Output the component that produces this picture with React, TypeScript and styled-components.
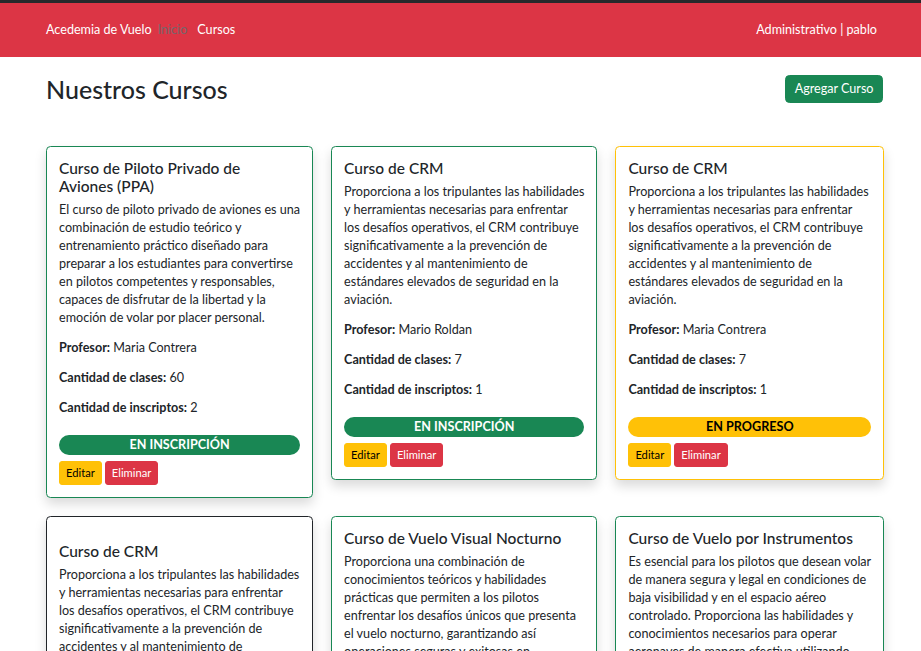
import React from "react";
import styled, { createGlobalStyle } from "styled-components";

const FONT = `Lato, "Noto Sans", "DejaVu Sans", sans-serif`;

const Global = createGlobalStyle`
  html, body { margin: 0; padding: 0; background: #fff; }
  body {
    font-family: ${FONT};
    font-size: 12.6px;
    line-height: 18px;
    color: #212529;
  }
  * { box-sizing: border-box; }
`;

const NavBar = styled.nav`
  display: flex;
  align-items: center;
  justify-content: space-between;
  height: 57px;
  border-top: 3px solid #27292b;
  background: #dc3545;
  padding: 0 44px 0 46px;
`;

const NavLeft = styled.div`
  display: flex;
  align-items: center;
`;

const Brand = styled.a`
  color: #fff;
  font-size: 12.6px;
  margin-right: 6px;
`;

const NavLink = styled.a<{ $muted?: boolean }>`
  color: ${(p) => (p.$muted ? "#76666b" : "#fff")};
  margin-right: 10px;
`;

const UserInfo = styled.span`
  color: #fff;
`;

const Main = styled.main`
  padding: 18px 38px 40px 46px;
`;

const HeaderRow = styled.div`
  display: flex;
  align-items: center;
  justify-content: space-between;
  height: 28px;
  margin-bottom: 43px;
`;

const PageTitle = styled.h1`
  margin: 0;
  font-size: 25px;
  font-weight: 500;
  line-height: 28px;
`;

const AddButton = styled.button`
  font-family: ${FONT};
  font-size: 12.6px;
  line-height: 18px;
  height: 28px;
  padding: 0 8.5px;
  color: #fff;
  background: #198754;
  border: 1px solid #198754;
  border-radius: 4.5px;
`;

const Grid = styled.div`
  display: grid;
  grid-template-columns: repeat(3, 1fr);
  column-gap: 18px;
  row-gap: 18px;
  align-items: start;
`;

const Card = styled.div<{ $border: string; $extraTop?: boolean }>`
  border: 1px solid ${(p) => p.$border};
  border-radius: 4.5px;
  background: #fff;
  box-shadow: 0 6px 12px rgba(0, 0, 0, 0.15);
  padding: ${(p) => (p.$extraTop ? "25px" : "12px")} 12px 12px;
`;

const CardTitle = styled.h5`
  margin: 0 0 6px;
  font-size: 15.5px;
  font-weight: 500;
  line-height: 18px;
`;

const Desc = styled.p`
  margin: 0 0 12px;
`;

const Line = styled.span`
  display: block;
  white-space: nowrap;
`;

const Info = styled.p`
  margin: 0 0 12px;
  strong { font-weight: 700; }
`;

const Badge = styled.div<{ $bg: string; $fg: string }>`
  margin-top: 18px;
  height: 20px;
  border-radius: 10px;
  background: ${(p) => p.$bg};
  color: ${(p) => p.$fg};
  font-weight: 700;
  font-size: 12.6px;
  line-height: 20px;
  text-align: center;
`;

const Actions = styled.div`
  display: flex;
  gap: 3px;
  margin-top: 6px;
`;

const SmallButton = styled.button<{ $variant: "warning" | "danger" }>`
  font-family: ${FONT};
  font-size: 11.2px;
  line-height: 16px;
  height: 24px;
  padding: 0 6px;
  border-radius: 3px;
  border: 1px solid ${(p) => (p.$variant === "warning" ? "#ffc107" : "#dc3545")};
  background: ${(p) => (p.$variant === "warning" ? "#ffc107" : "#dc3545")};
  color: ${(p) => (p.$variant === "warning" ? "#000" : "#fff")};
`;

type Status = "inscripcion" | "progreso";

interface Course {
  title: string[];
  desc: string[];
  profesor: string;
  clases: number;
  inscriptos: number;
  status: Status;
  border: string;
  extraTop?: boolean;
}

const crmDesc = [
  "Proporciona a los tripulantes las habilidades",
  "y herramientas necesarias para enfrentar",
  "los desafíos operativos, el CRM contribuye",
  "significativamente a la prevención de",
  "accidentes y al mantenimiento de",
  "estándares elevados de seguridad en la",
  "aviación.",
];

const courses: Course[] = [
  {
    title: ["Curso de Piloto Privado de", "Aviones (PPA)"],
    desc: [
      "El curso de piloto privado de aviones es una",
      "combinación de estudio teórico y",
      "entrenamiento práctico diseñado para",
      "preparar a los estudiantes para convertirse",
      "en pilotos competentes y responsables,",
      "capaces de disfrutar de la libertad y la",
      "emoción de volar por placer personal.",
    ],
    profesor: "Maria Contrera",
    clases: 60,
    inscriptos: 2,
    status: "inscripcion",
    border: "#198754",
  },
  {
    title: ["Curso de CRM"],
    desc: crmDesc,
    profesor: "Mario Roldan",
    clases: 7,
    inscriptos: 1,
    status: "inscripcion",
    border: "#198754",
  },
  {
    title: ["Curso de CRM"],
    desc: crmDesc,
    profesor: "Maria Contrera",
    clases: 7,
    inscriptos: 1,
    status: "progreso",
    border: "#ffc107",
  },
  {
    title: ["Curso de CRM"],
    desc: crmDesc,
    profesor: "Mario Roldan",
    clases: 7,
    inscriptos: 0,
    status: "inscripcion",
    border: "#212529",
    extraTop: true,
  },
  {
    title: ["Curso de Vuelo Visual Nocturno"],
    desc: [
      "Proporciona una combinación de",
      "conocimientos teóricos y habilidades",
      "prácticas que permiten a los pilotos",
      "enfrentar los desafíos únicos que presenta",
      "el vuelo nocturno, garantizando así",
      "operaciones seguras y exitosas en",
      "condiciones de baja luminosidad.",
    ],
    profesor: "Mario Roldan",
    clases: 12,
    inscriptos: 0,
    status: "inscripcion",
    border: "#198754",
  },
  {
    title: ["Curso de Vuelo por Instrumentos"],
    desc: [
      "Es esencial para los pilotos que desean volar",
      "de manera segura y legal en condiciones de",
      "baja visibilidad y en el espacio aéreo",
      "controlado. Proporciona las habilidades y",
      "conocimientos necesarios para operar",
      "aeronaves de manera efectiva utilizando",
      "únicamente instrumentos.",
    ],
    profesor: "Maria Contrera",
    clases: 40,
    inscriptos: 0,
    status: "inscripcion",
    border: "#198754",
  },
];

const statusStyle: Record<Status, { label: string; bg: string; fg: string }> = {
  inscripcion: { label: "EN INSCRIPCIÓN", bg: "#198754", fg: "#fff" },
  progreso: { label: "EN PROGRESO", bg: "#ffc107", fg: "#000" },
};

function CourseCard({ c }: { c: Course }) {
  const s = statusStyle[c.status];
  return (
    <Card $border={c.border} $extraTop={c.extraTop}>
      <CardTitle>
        {c.title.map((t) => (
          <Line key={t}>{t}</Line>
        ))}
      </CardTitle>
      <Desc>
        {c.desc.map((l, i) => (
          <Line key={i}>{l}</Line>
        ))}
      </Desc>
      <Info>
        <strong>Profesor:</strong> {c.profesor}
      </Info>
      <Info>
        <strong>Cantidad de clases:</strong> {c.clases}
      </Info>
      <Info>
        <strong>Cantidad de inscriptos:</strong> {c.inscriptos}
      </Info>
      <Badge $bg={s.bg} $fg={s.fg}>
        {s.label}
      </Badge>
      <Actions>
        <SmallButton $variant="warning">Editar</SmallButton>
        <SmallButton $variant="danger">Eliminar</SmallButton>
      </Actions>
    </Card>
  );
}

export default function App() {
  return (
    <>
      <Global />
      <NavBar>
        <NavLeft>
          <Brand>Acedemia de Vuelo</Brand>
          <NavLink $muted>Inicio</NavLink>
          <NavLink>Cursos</NavLink>
        </NavLeft>
        <UserInfo>Administrativo | pablo</UserInfo>
      </NavBar>
      <Main>
        <HeaderRow>
          <PageTitle>Nuestros Cursos</PageTitle>
          <AddButton>Agregar Curso</AddButton>
        </HeaderRow>
        <Grid>
          {courses.map((c, i) => (
            <CourseCard key={i} c={c} />
          ))}
        </Grid>
      </Main>
    </>
  );
}
